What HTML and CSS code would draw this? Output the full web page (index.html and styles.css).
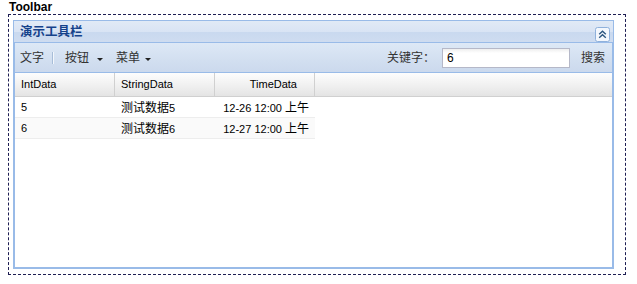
FILE: index.html
```html
<!DOCTYPE html>
<html lang="zh">
  <head>
    <meta charset="UTF-8" />
    <title>Toolbar</title>
    <link rel="stylesheet" href="styles.css">
  </head>
  <body>
    <div class="caption">Toolbar</div>
    <div class="frame">
      <div class="panel">
        <div class="panel-header">
          <span class="panel-title">演示工具栏</span>
          <span class="tool-toggle">
            <svg width="15" height="15" viewBox="0 0 15 15">
              <rect x="0.5" y="0.5" width="14" height="14" rx="2" fill="#f3f7fd" stroke="#8fb1dc" />
              <path d="M4.2 7.2L7.5 4.2L10.8 7.2M4.2 10.8L7.5 7.8L10.8 10.8" fill="none" stroke="#2b5680" stroke-width="1.4" />
            </svg>
          </span>
        </div>
        <div class="panel-body">
          <div class="tbar">
            <span class="tb-text">文字</span>
            <span class="tb-sep"></span>
            <span class="tb-btn btn-split">按钮<i class="arrow"></i></span>
            <span class="tb-btn btn-menu">菜单<i class="arrow"></i></span>
            <span class="tb-text tb-label">关键字：</span>
            <input class="tb-input" type="text" value="6" />
            <span class="tb-btn tb-search">搜索</span>
          </div>
          <div class="grid">
            <div class="grid-hrow">
              <div class="hd">IntData</div>
              <div class="hd">StringData</div>
              <div class="hd hd-right">TimeData</div>
              <div class="hd hd-fill"></div>
            </div>
            <div class="grid-row">
              <div class="cell">5</div>
              <div class="cell"><span class="zh">测试数据</span>5</div>
              <div class="cell cell-right">12-26 12:00 <span class="zh">上午</span></div>
            </div>
            <div class="grid-row row-alt">
              <div class="cell">6</div>
              <div class="cell"><span class="zh">测试数据</span>6</div>
              <div class="cell cell-right">12-27 12:00 <span class="zh">上午</span></div>
            </div>
          </div>
        </div>
      </div>
    </div>
  </body>
</html>
```

FILE: styles.css
```css
* {
  box-sizing: border-box;
}

body {
  margin: 0;
  font-family: "Liberation Sans", "Noto Sans CJK SC", sans-serif;
  background: #fff;
  color: #000;
}

.caption {
  height: 14px;
  padding-left: 9px;
  font-size: 12px;
  font-weight: bold;
  line-height: 14px;
}

.frame {
  width: 618px;
  height: 261px;
  margin-left: 8px;
  padding: 5px 0 0 4px;
  border: 1px dashed #1d1d52;
}

.panel {
  width: 601px;
  height: 249px;
  border: 1px solid #99bbe8;
  display: flex;
  flex-direction: column;
}

.panel-header {
  height: 22px;
  display: flex;
  align-items: center;
  justify-content: space-between;
  padding: 0 3px 0 6px;
  border-bottom: 1px solid #99bbe8;
  background: linear-gradient(#e1eaf6 0, #d9e4f4 50%, #c9d9ef 54%, #cedcf0 100%);
}

.panel-title {
  color: #15428b;
  font-size: 12.5px;
  font-weight: bold;
  line-height: 14px;
}

.tool-toggle {
  display: flex;
  margin-top: 5px;
}

.panel-body {
  flex: 1;
  display: flex;
  flex-direction: column;
  border: 1px solid #99bbe8;
  border-top: none;
}

.tbar {
  height: 30px;
  display: flex;
  align-items: center;
  padding: 1px 7px 0 5px;
  border-bottom: 1px solid #99bbe8;
  background: linear-gradient(#dde8f6, #d2dff0 60%, #cbd9ed);
  font-size: 12px;
  color: #333;
}

.tb-text,
.tb-btn {
  line-height: 16px;
}

.tb-sep {
  width: 2px;
  height: 12px;
  margin: 0 11px 0 8px;
  border-left: 1px solid #a7bdd8;
  border-right: 1px solid #f3f7fc;
}

.tb-btn {
  display: flex;
  align-items: center;
}

.arrow {
  width: 0;
  height: 0;
  margin-top: 2px;
  border-left: 3px solid transparent;
  border-right: 3px solid transparent;
  border-top: 3px solid #222;
}

.btn-split .arrow {
  margin-left: 8px;
}

.btn-menu {
  margin-left: 13px;
}

.btn-menu .arrow {
  margin-left: 5px;
}

.tb-label {
  margin-left: auto;
}

.tb-input {
  width: 128px;
  height: 20px;
  margin-left: 7px;
  padding: 0 4px;
  border: 1px solid #b5b8c8;
  background: linear-gradient(#eeeeee, #fff 4px);
  font-family: "Liberation Sans", sans-serif;
  font-size: 12px;
  color: #000;
  outline: none;
}

.tb-search {
  margin-left: 11px;
}

.grid {
  flex: 1;
  background: #fff;
}

.grid-hrow {
  height: 24px;
  display: flex;
  border-bottom: 1px solid #d0d0d0;
  background: linear-gradient(#fdfdfd, #f0f0f0 55%, #e4e4e4);
}

.hd {
  width: 100px;
  padding: 0 5px 0 6px;
  border-right: 1px solid #d0d0d0;
  font-size: 11px;
  line-height: 23px;
}

.hd-right {
  text-align: right;
  padding-right: 17px;
}

.hd-fill {
  flex: 1;
  border-right: none;
}

.grid-row {
  width: 300px;
  height: 21px;
  display: flex;
  border-bottom: 1px solid #ededed;
}

.row-alt {
  background: #fafafa;
}

.cell {
  width: 100px;
  padding: 0 6px;
  font-size: 11px;
  line-height: 20px;
  white-space: nowrap;
}

.cell-right {
  text-align: right;
}

.zh {
  font-family: "Noto Sans CJK SC", sans-serif;
  font-size: 12px;
}
```
